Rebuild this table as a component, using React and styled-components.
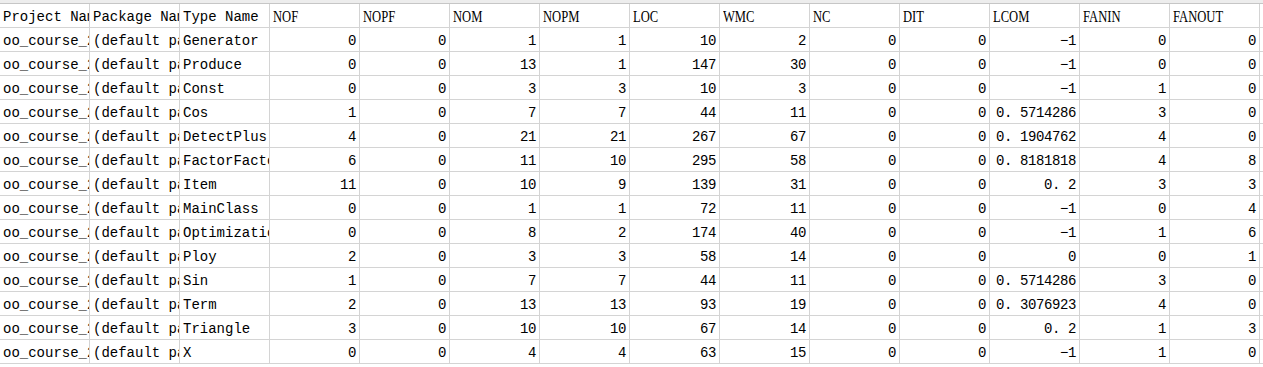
import React from "react";
import styled, { createGlobalStyle } from "styled-components";

const GlobalStyle = createGlobalStyle`
  html, body {
    margin: 0;
    padding: 0;
    background: #ffffff;
  }
`;

const Sheet = styled.div`
  width: 1263px;
  height: 367px;
  overflow: hidden;
  background: #ffffff;
  font-family: "Liberation Mono", "Noto Sans CJK SC", monospace;
  font-size: 14px;
  color: #000000;
`;

const TopStrip = styled.div`
  height: 3px;
  background: #ededed;
  border-bottom: 1px solid #c6c6c6;
`;

const Row = styled.div`
  display: grid;
  grid-template-columns: repeat(14, 90px) 1fr;
  height: 24px;
`;

const Cell = styled.div`
  box-sizing: border-box;
  height: 24px;
  border-right: 1px solid #d4d4d4;
  border-bottom: 1px solid #d4d4d4;
  padding: 3px ${(p) => (p.$num ? "3px" : "0")} 0 ${(p) => (p.$num ? "0" : "3px")};
  line-height: 20px;
  letter-spacing: ${(p) => (p.$num ? "-0.4px" : "0")};
  white-space: nowrap;
  overflow: hidden;
  text-align: ${(p) => (p.$num ? "right" : "left")};
`;

const Filler = styled.div`
  box-sizing: border-box;
  height: 24px;
  border-bottom: 1px solid #d4d4d4;
`;

const MetricLabel = styled.span`
  display: inline-block;
  font-family: "Liberation Serif", "Times New Roman", serif;
  font-size: 17px;
  transform: scaleX(0.74);
  transform-origin: left center;
`;

const metrics = ["NOF", "NOPF", "NOM", "NOPM", "LOC", "WMC", "NC", "DIT", "LCOM", "FANIN", "FANOUT"];

const rows = [
  ["Generator", 0, 0, 1, 1, 10, 2, 0, 0, "−1", 0, 0],
  ["Produce", 0, 0, 13, 1, 147, 30, 0, 0, "−1", 0, 0],
  ["Const", 0, 0, 3, 3, 10, 3, 0, 0, "−1", 1, 0],
  ["Cos", 1, 0, 7, 7, 44, 11, 0, 0, "0. 5714286", 3, 0],
  ["DetectPlus", 4, 0, 21, 21, 267, 67, 0, 0, "0. 1904762", 4, 0],
  ["FactorFactory", 6, 0, 11, 10, 295, 58, 0, 0, "0. 8181818", 4, 8],
  ["Item", 11, 0, 10, 9, 139, 31, 0, 0, "0. 2", 3, 3],
  ["MainClass", 0, 0, 1, 1, 72, 11, 0, 0, "−1", 0, 4],
  ["Optimization", 0, 0, 8, 2, 174, 40, 0, 0, "−1", 1, 6],
  ["Ploy", 2, 0, 3, 3, 58, 14, 0, 0, "0", 0, 1],
  ["Sin", 1, 0, 7, 7, 44, 11, 0, 0, "0. 5714286", 3, 0],
  ["Term", 2, 0, 13, 13, 93, 19, 0, 0, "0. 3076923", 4, 0],
  ["Triangle", 3, 0, 10, 10, 67, 14, 0, 0, "0. 2", 1, 3],
  ["X", 0, 0, 4, 4, 63, 15, 0, 0, "−1", 1, 0],
];

const App = () => {
  return (
    <>
      <GlobalStyle />
      <Sheet>
        <TopStrip />
        <Row>
          <Cell>Project Name</Cell>
          <Cell>Package Name</Cell>
          <Cell>Type Name</Cell>
          {metrics.map((m) => (
            <Cell key={m}>
              <MetricLabel>{m}</MetricLabel>
            </Cell>
          ))}
          <Filler />
        </Row>
        {rows.map(([type, ...values]) => (
          <Row key={type}>
            <Cell>oo_course_2019_homework_3</Cell>
            <Cell>(default package)</Cell>
            <Cell>{type}</Cell>
            {values.map((v, i) => (
              <Cell key={i} $num>
                {v}
              </Cell>
            ))}
            <Filler />
          </Row>
        ))}
      </Sheet>
    </>
  );
};

export default App;
